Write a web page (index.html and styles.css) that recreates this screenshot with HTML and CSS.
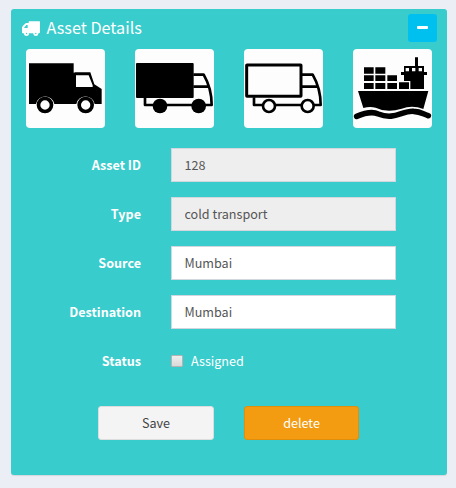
FILE: index.html
```html
<!DOCTYPE html>
<html lang="en">
<head>
<meta charset="utf-8">
<title>Asset Details</title>
<link rel="stylesheet" href="styles.css">
</head>
<body>
<main class="card">
  <header class="card-header">
    <svg class="title-icon" viewBox="65 62 54 45" aria-hidden="true">
      <path fill-rule="evenodd" d="M87 63H117Q119 63 119 65V96Q119 99 114 99A7.500 7.500 0 0 1 99 99H86A7.500 7.500 0 0 1 71 99Q65 100 65 96V82Q65 79 68 76L74 70Q76 68 79 68H85V65Q85 63 87 63ZM71 83H82V74H78Z"/>
      <circle cx="78.500" cy="99.500" r="6.800"/><circle cx="106.500" cy="99.500" r="6.800"/>
      <g class="hub"><circle cx="78.500" cy="99.500" r="2"/><circle cx="106.500" cy="99.500" r="2"/></g>
    </svg>
    <h1 class="title">Asset Details</h1>
    <button class="collapse" type="button" aria-label="Collapse"><span class="minus"></span></button>
  </header>

  <div class="tiles">
    <svg class="tile" viewBox="30 27 237 237">
      <path d="M39 70H173V97H223L235 133L257 147V192H236A28 28 0 0 0 181 192H115A28 28 0 0 0 60 192H39Z"/>
      <path class="paper" d="M180 106H218L230 136V141H180ZM173 97H176V98H173Z"/>
      <circle class="ring" cx="87" cy="195" r="19.500"/><circle class="ring" cx="209" cy="195" r="19.500"/>
    </svg>
    <svg class="tile" viewBox="27 27 237 237">
      <rect x="30" y="69" width="173" height="105" rx="3"/>
      <path class="line" d="M202 104H233Q257 145 257 195H57V172M202 140H250"/>
      <circle cx="102" cy="198" r="22"/><circle cx="218" cy="198" r="22"/>
    </svg>
    <svg class="tile" viewBox="30 27 237 237">
      <rect class="line heavy" x="38" y="75" width="163" height="94" rx="1"/>
      <path class="line" d="M203 104H236Q260 145 260 195H60V172M203 140H252"/>
      <circle class="wheel" cx="105" cy="198" r="18"/><circle class="wheel" cx="221" cy="198" r="18"/>
    </svg>
    <svg class="tile" viewBox="30 27 237 237">
      <path d="M63 82H92V101H63ZM97 82H127V101H97ZM63 106H92V123H63ZM97 106H127V123H97ZM133 106H162V123H133ZM63 129H92V147H63ZM97 129H127V147H97ZM133 129H162V147H133ZM168 127H198V147H168Z"/>
      <path d="M216 52H225V78H243V96H252V105H243V147H202V123H183V105H174V96H183V78H216Z"/>
      <path class="paper" d="M188 84H198V94H188ZM207 84H217V94H207ZM227 84H237V94H227Z"/>
      <path d="M45 153H256L241 207Q208 194 176 206Q132 220 98 203Q80 198 61 204Z"/>
      <path class="wave" d="M41 229C65 219 86 213 106 222C155 242 177 211 212 214C234 215 242 223 256 227"/>
    </svg>
  </div>

  <form class="form">
    <label class="label" for="asset">Asset ID</label>
    <input class="field" id="asset" value="128" readonly>
    <label class="label" for="type">Type</label>
    <input class="field" id="type" value="cold transport" readonly>
    <label class="label" for="source">Source</label>
    <input class="field" id="source" value="Mumbai">
    <label class="label" for="destination">Destination</label>
    <input class="field" id="destination" value="Mumbai">
    <span class="label">Status</span>
    <label class="status"><input class="check" type="checkbox">Assigned</label>
  </form>

  <div class="actions">
    <button class="button" type="button">Save</button>
    <button class="button delete" type="button">delete</button>
  </div>
</main>
</body>
</html>
```

FILE: styles.css
```css
* { box-sizing: border-box; }
body {
  margin: 0;
  padding: 9px 9px 13px 11px;
  height: 488px;
  overflow: hidden;
  background: #ebeef4;
  font: 12.6px/20px "Noto Sans CJK SC", "Open Sans", sans-serif;
}
.card {
  height: 466px;
  border-radius: 3px;
  background: #39cccc;
  box-shadow: 0 1px 1px rgba(0, 0, 0, .1);
  color: #fff;
}
.card-header {
  display: flex;
  align-items: center;
  height: 40px;
  padding: 0 10px 2px;
}
.title-icon { width: 18px; height: 15px; fill: #fff; margin: 1px 0 0 1px; }
.hub { fill: #39cccc; }
.title { margin: 0 0 2px 6.5px; font-size: 16.2px; line-height: 20px; font-weight: 400; }
.collapse {
  display: flex;
  align-items: center;
  justify-content: center;
  width: 29px;
  height: 28px;
  margin-left: auto;
  padding: 0;
  border: 0;
  border-radius: 3px;
  background: #00c0ef;
}
.minus { width: 11px; height: 3px; border-radius: 1px; background: #fff; margin-bottom: 1px; }
.tiles { display: flex; justify-content: space-between; padding: 0 15px; }
.tile { display: block; width: 79px; height: 79px; border-radius: 4px; background: #fdfdfd; }
.paper { fill: #fdfdfd; }
.ring { fill: #fdfdfd; stroke: #000; stroke-width: 11; }
.line { fill: none; stroke: #000; stroke-width: 8; stroke-linejoin: round; }
.heavy { stroke-width: 9; }
.wheel { fill: #fdfdfd; stroke: #000; stroke-width: 8; }
.wave { fill: none; stroke: #000; stroke-width: 17; stroke-linecap: round; }
.form {
  display: grid;
  grid-template-columns: 130px 225px;
  grid-auto-rows: 34px;
  gap: 15px 30px;
  align-items: center;
  margin-top: 20px;
}
.label { text-align: right; font-weight: 700; }
.field {
  width: 225px;
  height: 34px;
  padding: 5px 12.5px 7px;
  border: 1px solid #d2d6de;
  border-radius: 0;
  background: #fff;
  color: #555;
  font: inherit;
  outline: 0;
}
.field:read-only { background: #eee; }
.status { display: flex; align-items: center; }
.check {
  appearance: none;
  width: 12px;
  height: 12px;
  margin: 0 8px 0 0;
  border: 1px solid #b4b4b4;
  border-radius: 1px;
  background: linear-gradient(#eee, #d9d9d9);
}
.actions { display: flex; gap: 30px; margin: 28px 0 0 87px; }
.button {
  width: 116px;
  height: 34px;
  padding: 0;
  border: 1px solid #ddd;
  border-radius: 3px;
  background: #f4f4f4;
  color: #444;
  font: inherit;
}
.delete { width: 115px; border-color: #e08e0b; background: #f39c12; color: #fff; }
```
